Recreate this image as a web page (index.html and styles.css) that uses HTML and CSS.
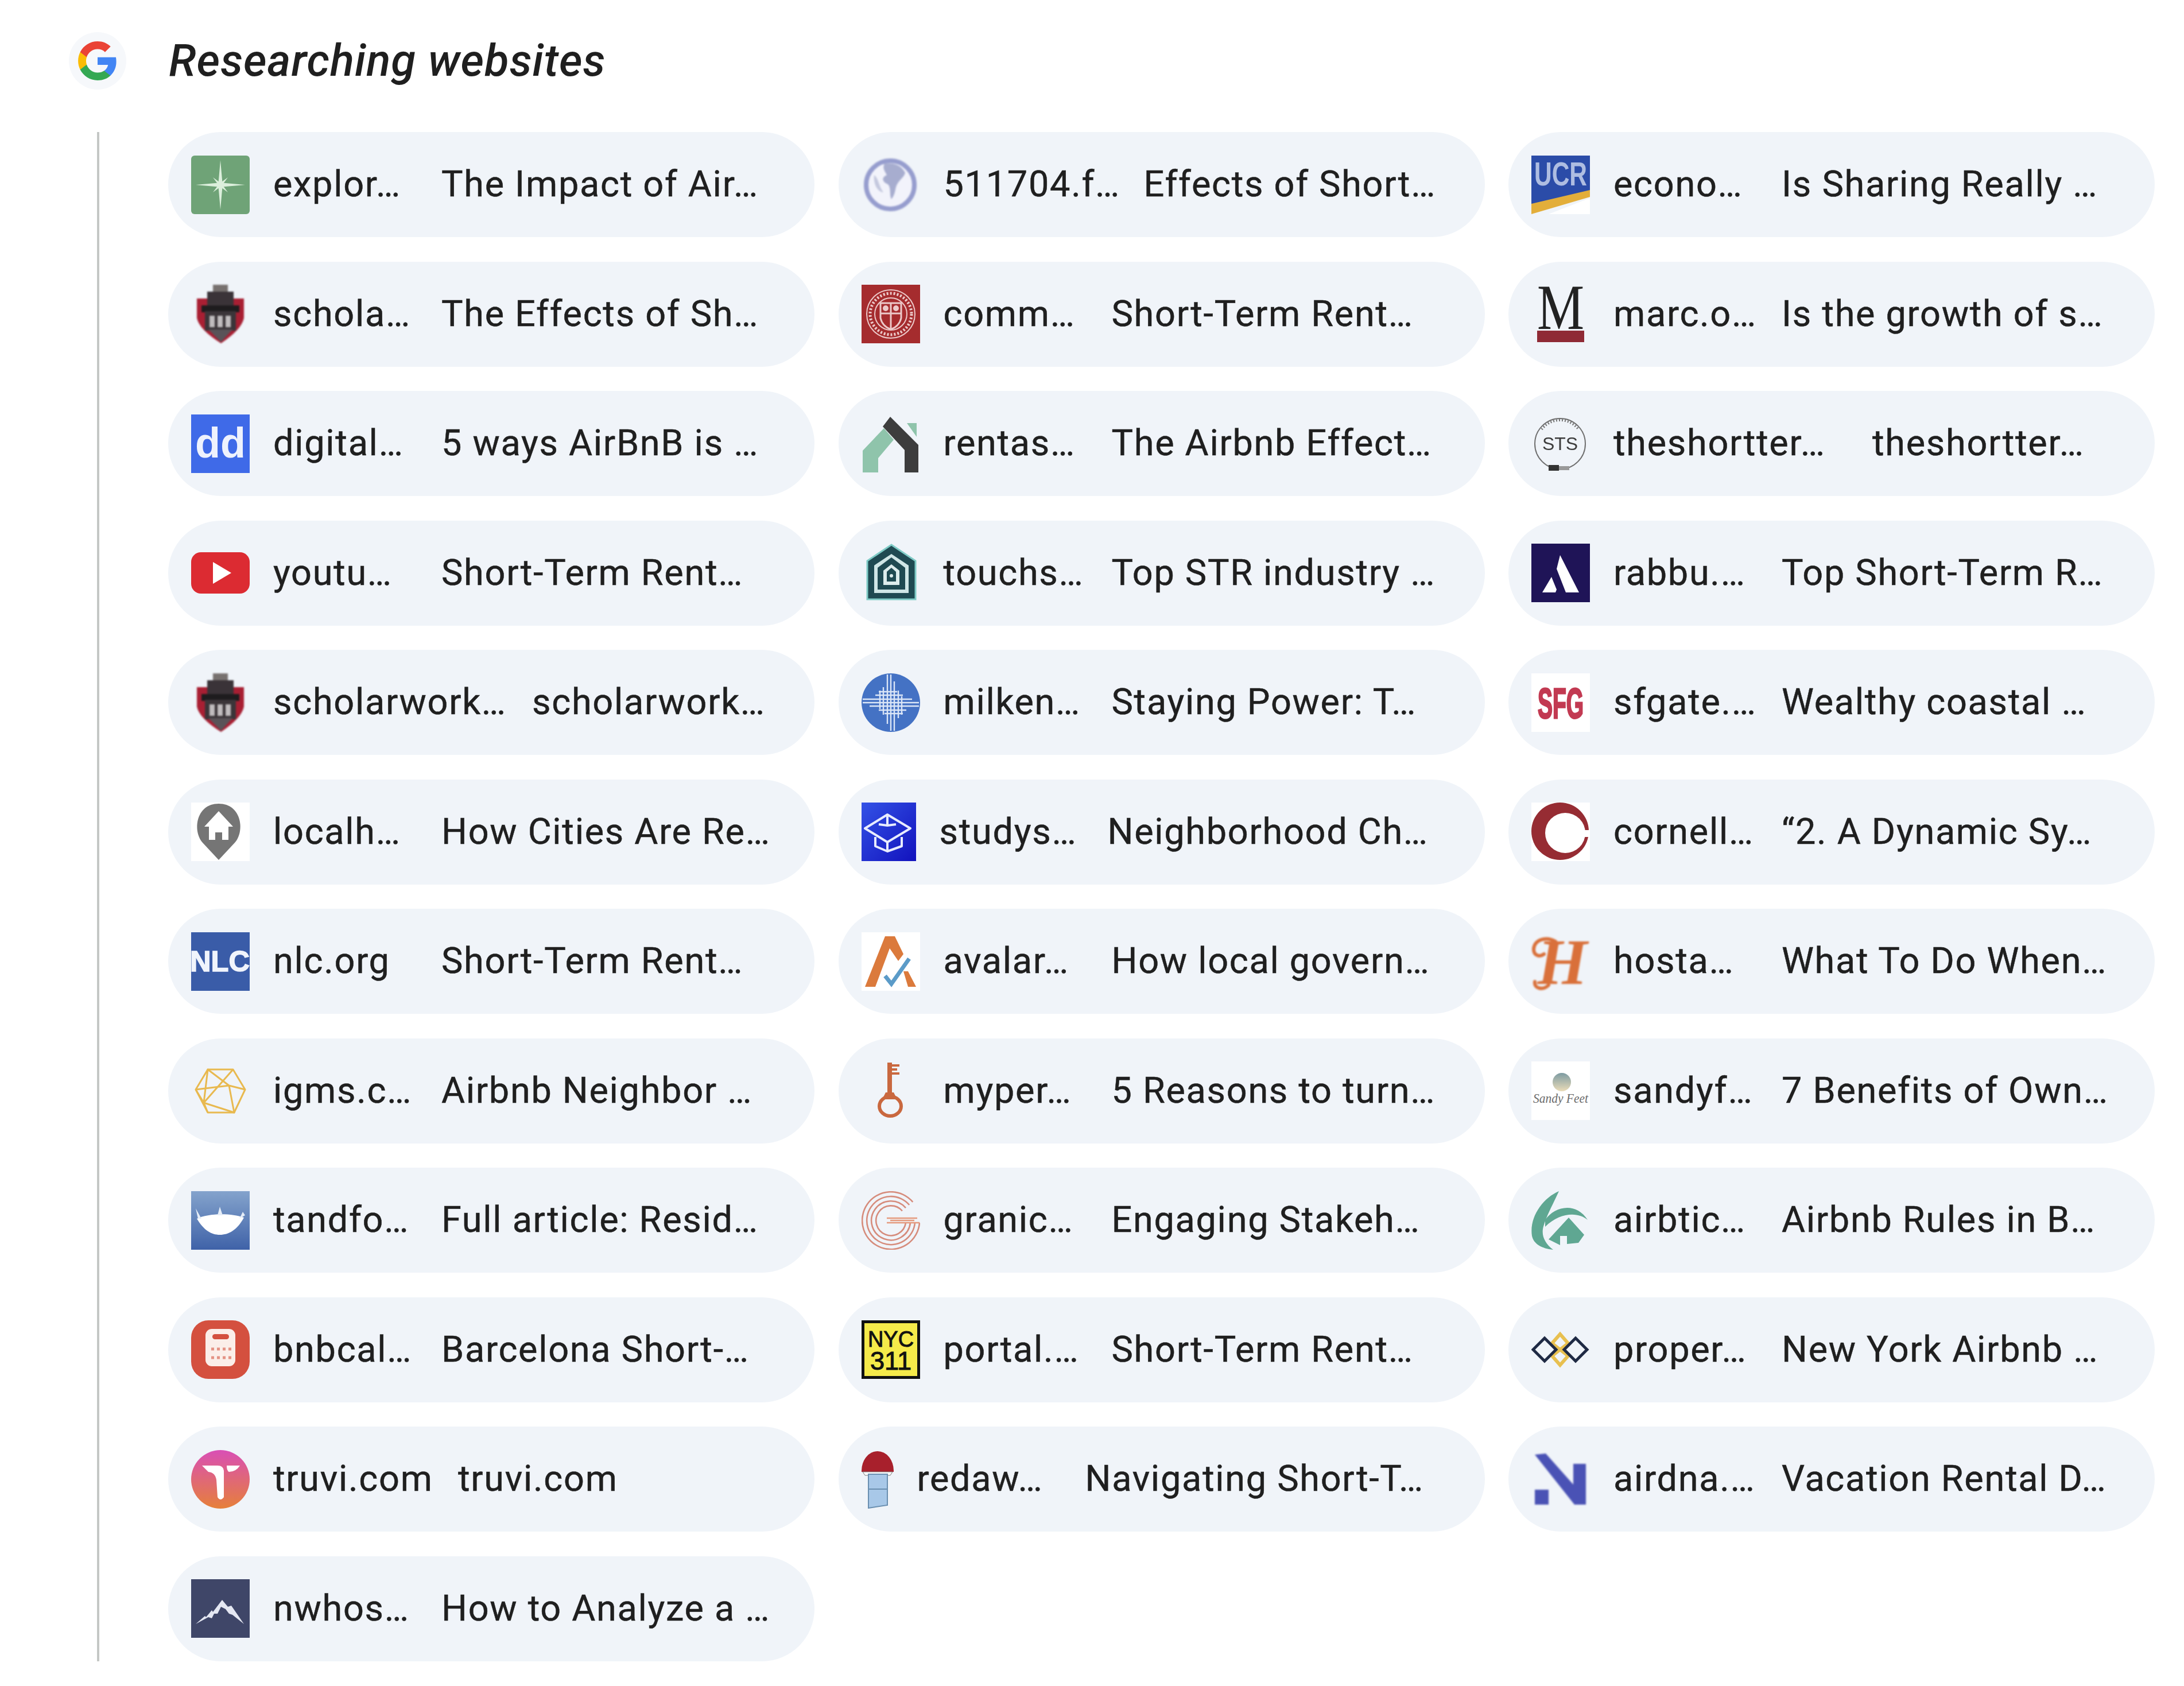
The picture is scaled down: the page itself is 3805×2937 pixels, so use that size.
FILE: index.html
```html
<!DOCTYPE html>
<html lang="en">
<head>
<meta charset="utf-8">
<title>Researching websites</title>
<link rel="stylesheet" href="styles.css">
</head>
<body>
<main class="page">
<header class="head">
<span class="g-badge"><svg class="g-logo" viewBox="0 0 48 48"><path fill="#4285F4" d="M45.12 24.5c0-1.56-.14-3.06-.4-4.5H24v8.51h11.84c-.51 2.75-2.06 5.08-4.39 6.64v5.52h7.11c4.16-3.83 6.56-9.47 6.56-15.17z"/><path fill="#34A853" d="M24 46c5.94 0 10.92-1.97 14.56-5.33l-7.11-5.52c-1.97 1.32-4.49 2.1-7.45 2.1-5.73 0-10.58-3.87-12.31-9.07H4.34v5.7C7.96 41.07 15.4 46 24 46z"/><path fill="#FBBC05" d="M11.69 28.18C11.25 26.86 11 25.45 11 24s.25-2.86.69-4.18v-5.7H4.34C2.85 17.09 2 20.45 2 24c0 3.55.85 6.91 2.34 9.88l7.35-5.7z"/><path fill="#EA4335" d="M24 10.75c3.23 0 6.13 1.11 8.41 3.29l6.31-6.31C34.91 4.18 29.93 2 24 2 15.4 2 7.96 6.93 4.34 14.12l7.35 5.7c1.73-5.2 6.58-9.07 12.31-9.07z"/></svg></span>
<h1 class="title">Researching websites</h1>
</header>
<section class="thread">
<div class="grid">

<a class="chip"><svg class="ico" viewBox="0 0 102 102"><rect width="102" height="102" rx="6" fill="#6fa377"/><path fill="#dcefdc" d="M51 8 54.5 47.5 94 51 54.5 54.5 51 94 47.5 54.5 8 51 47.5 47.5Z"/><path fill="#dcefdc" d="M38 38 53 49 64 64 49 53ZM64 38 53 53 38 64 49 49Z"/></svg><span class="dom">explor…</span><span class="ttl">The Impact of Air…</span></a>
<a class="chip"><svg class="ico ico-soft" viewBox="0 0 102 102"><circle cx="50" cy="51" r="42" fill="#f2f3fb" stroke="#969dce" stroke-width="8"/><path fill="#a7adcf" d="M40 14C58 12 70 18 76 30 74 38 66 42 62 50 58 56 60 66 52 76 48 68 52 56 46 50 36 46 34 38 44 34 40 26 36 22 40 14Z"/><path fill="#c4c8de" d="M22 34C30 40 30 54 38 64 30 64 20 52 22 34Z"/></svg><span class="dom dom-md">511704.f…</span><span class="ttl">Effects of Short…</span></a>
<a class="chip"><svg class="ico" viewBox="0 0 102 102"><path fill="#2b4ca8" d="M0 0H102V64L0 88Z"/><path fill="#e3ae3a" d="M0 84 102 60V72L0 102Z"/><path fill="#fff" d="M30 102 102 74V102Z"/><text class="logo-sans logo-ghost" x="51" y="52" font-size="58" fill="#c5d1ec" text-anchor="middle" textLength="92" lengthAdjust="spacingAndGlyphs">UCR</text></svg><span class="dom">econo…</span><span class="ttl">Is Sharing Really …</span></a>

<a class="chip"><svg class="ico ico-soft" viewBox="0 0 102 102"><rect x="38" y="0" width="26" height="16" fill="#77716f"/><path fill="#a81f33" d="M10 24H92V58Q88 78 52 102 14 78 10 58Z"/><rect x="28" y="12" width="46" height="26" fill="#3a3338"/><rect x="18" y="36" width="66" height="12" fill="#1e1c1e"/><rect x="24" y="46" width="54" height="34" fill="#3b3539"/><path fill="#c0bcbe" d="M32 54h9v20h-9zM46 54h9v20h-9zM60 54h9v20h-9z"/><path fill="#595358" d="M30 78 52 100 72 78Z"/></svg><span class="dom">schola…</span><span class="ttl">The Effects of Sh…</span></a>
<a class="chip"><svg class="ico" viewBox="0 0 102 102"><rect width="102" height="102" fill="#a52c2e"/><g fill="none" stroke="#ecc9c9"><circle cx="51" cy="51" r="42" stroke-width="2"/><circle cx="51" cy="51" r="36" stroke-width="5" stroke-dasharray="3 3"/><circle cx="51" cy="51" r="28" stroke-width="2"/><path stroke-width="3" d="M33 32H69V58Q66 72 51 78 36 72 33 58ZM33 50H69M51 32V78"/></g><circle cx="42" cy="41" r="5" fill="#ecc9c9"/><circle cx="60" cy="41" r="5" fill="#ecc9c9"/></svg><span class="dom">comm…</span><span class="ttl">Short-Term Rent…</span></a>
<a class="chip"><svg class="ico" viewBox="0 0 102 102"><text class="logo-serif" x="51" y="77" font-size="112" fill="#222" text-anchor="middle" textLength="82" lengthAdjust="spacingAndGlyphs">M</text><rect x="10" y="80" width="82" height="20" fill="#8f2a35"/></svg><span class="dom">marc.o…</span><span class="ttl">Is the growth of s…</span></a>

<a class="chip"><svg class="ico" viewBox="0 0 102 102"><rect width="102" height="102" fill="#3f6ae8"/><text class="logo-sans" x="51" y="75" font-size="74" fill="#eef2fd" text-anchor="middle" textLength="88" lengthAdjust="spacingAndGlyphs">dd</text></svg><span class="dom">digital…</span><span class="ttl">5 ways AirBnB is …</span></a>
<a class="chip"><svg class="ico" viewBox="0 0 102 102"><path fill="#8fc4ab" d="M2 63 39 24 56 44 29 76V101H2ZM79 15H96V39Z"/><path fill="#3d3d3d" d="M50 4 99 53V101H75V62L37 21Z"/></svg><span class="dom">rentas…</span><span class="ttl">The Airbnb Effect…</span></a>
<a class="chip"><svg class="ico" viewBox="0 0 102 102"><circle cx="50" cy="51" r="44" fill="none" stroke="#6f6f6f" stroke-width="2"/><path fill="none" stroke="#777" stroke-width="4" stroke-dasharray="2 3" d="M18 26A40 40 0 0 1 82 26"/><text class="logo-plain" x="50" y="62" font-size="32" fill="#3c3c3c" text-anchor="middle">STS</text><rect x="30" y="88" width="18" height="10" fill="#333"/><rect x="48" y="90" width="18" height="7" fill="#999"/></svg><span class="dom dom-lg">theshortter…</span><span class="ttl">theshortter…</span></a>

<a class="chip"><svg class="ico" viewBox="0 0 102 102"><rect y="15" width="102" height="72" rx="17" fill="#dc2b32"/><path fill="#fff" d="M38 32V70L70 51Z"/></svg><span class="dom">youtu…</span><span class="ttl">Short-Term Rent…</span></a>
<a class="chip"><svg class="ico" viewBox="0 0 102 102"><path fill="#1f4a52" stroke="#7fcbc6" stroke-width="3" d="M52 2 94 30V97H10V30Z"/><path fill="#cfe6e6" d="M52 18 82 38V86H22V38Z"/><path fill="#1f4a52" d="M52 24 76 42V80H28V42Z"/><path fill="#dcecec" d="M52 36 66 47V72H38V47Z"/><path fill="#1f4a52" d="M52 42 60 49V66H44V49Z"/><circle cx="52" cy="56" r="3" fill="#dcecec"/></svg><span class="dom">touchs…</span><span class="ttl">Top STR industry …</span></a>
<a class="chip"><svg class="ico" viewBox="0 0 102 102"><rect width="102" height="102" fill="#1f1457"/><path fill="#fff" d="M50 20 83 85H60L44 44ZM35 58 44 80 42 85H19Z"/></svg><span class="dom">rabbu.…</span><span class="ttl">Top Short-Term R…</span></a>

<a class="chip"><svg class="ico ico-soft" viewBox="0 0 102 102"><rect x="38" y="0" width="26" height="16" fill="#77716f"/><path fill="#a81f33" d="M10 24H92V58Q88 78 52 102 14 78 10 58Z"/><rect x="28" y="12" width="46" height="26" fill="#3a3338"/><rect x="18" y="36" width="66" height="12" fill="#1e1c1e"/><rect x="24" y="46" width="54" height="34" fill="#3b3539"/><path fill="#c0bcbe" d="M32 54h9v20h-9zM46 54h9v20h-9zM60 54h9v20h-9z"/><path fill="#595358" d="M30 78 52 100 72 78Z"/></svg><span class="dom dom-lg">scholarwork…</span><span class="ttl">scholarwork…</span></a>
<a class="chip"><svg class="ico" viewBox="0 0 102 102"><circle cx="51" cy="51" r="51" fill="#4472c4"/><path fill="none" stroke="#dbe6f7" stroke-width="2.4" d="M2 45H88M2 51H100M14 57H100M24 38H72M30 64H78M30 32H62M40 70H72M45 2V88M51 2V100M57 14V100M38 24V72M64 30V78M32 30V62M70 40V72"/></svg><span class="dom">milken…</span><span class="ttl">Staying Power: T…</span></a>
<a class="chip"><svg class="ico" viewBox="0 0 102 102"><rect width="102" height="102" fill="#fff"/><text class="logo-sans" x="51" y="78" font-size="74" fill="#c23a52" stroke="#c23a52" stroke-width="3" text-anchor="middle" textLength="80" lengthAdjust="spacingAndGlyphs">SFG</text></svg><span class="dom">sfgate.…</span><span class="ttl">Wealthy coastal …</span></a>

<a class="chip"><svg class="ico" viewBox="0 0 102 102"><rect width="102" height="102" fill="#fff"/><path fill="#757575" d="M48 100 20 70C2 50 8 2 48 2 88 2 94 50 76 70Z"/><path fill="#fff" d="M48 15 73 42H65V65H54V52H42V65H31V42H23Z"/></svg><span class="dom">localh…</span><span class="ttl">How Cities Are Re…</span></a>
<a class="chip"><svg class="ico ico-95" viewBox="0 0 95 102"><defs><linearGradient id="gStudy" x1="0" y1="0" x2="1" y2="1"><stop offset="0" stop-color="#3352e6"/><stop offset="1" stop-color="#1212bd"/></linearGradient></defs><rect width="95" height="102" fill="url(#gStudy)"/><g fill="none" stroke="#e8ecff" stroke-width="4" stroke-linejoin="round"><path d="M45 21 85 45 45 69 6 45Z"/><path d="M45 21V40M24 60V76L45 85 70 76V60M45 69V85M30 38 45 40 60 38"/></g></svg><span class="dom">studys…</span><span class="ttl">Neighborhood Ch…</span></a>
<a class="chip"><svg class="ico" viewBox="0 0 102 102"><rect width="102" height="102" fill="#fff"/><circle cx="50" cy="50" r="50" fill="#962c33"/><circle cx="59" cy="53" r="35" fill="#fff"/><path fill="#fff" d="M70 48H102V60H70Z"/></svg><span class="dom">cornell…</span><span class="ttl">“2. A Dynamic Sy…</span></a>

<a class="chip"><svg class="ico" viewBox="0 0 102 102"><rect width="102" height="102" fill="#3a5ca8"/><text class="logo-sans" x="50" y="68" font-size="50" fill="#f0f4fc" stroke="#f0f4fc" stroke-width="1.5" text-anchor="middle" textLength="104" lengthAdjust="spacingAndGlyphs">NLC</text></svg><span class="dom">nlc.org</span><span class="ttl">Short-Term Rent…</span></a>
<a class="chip"><svg class="ico" viewBox="0 0 102 102"><rect width="102" height="102" fill="#fff"/><path fill="#db7a3c" d="M6 95H24L49 28 64 50 73 38 58 7H41ZM73 68H81L95 95H81Z"/><path fill="none" stroke="#5b9bc8" stroke-width="7" d="M41 76 52 90 83 46"/></svg><span class="dom">avalar…</span><span class="ttl">How local govern…</span></a>
<a class="chip"><svg class="ico ico-soft" viewBox="0 0 102 102"><text class="logo-serif-i" x="54" y="90" font-size="112" fill="#d9703a" text-anchor="middle">H</text><path fill="none" stroke="#d9703a" stroke-width="6" stroke-linecap="round" d="M42 16C24 6 4 14 4 30 4 40 14 44 22 38M30 92C20 102 4 98 6 86"/></svg><span class="dom">hosta…</span><span class="ttl">What To Do When…</span></a>

<a class="chip"><svg class="ico" viewBox="0 0 102 102"><g fill="none" stroke="#e8b94f" stroke-width="3" stroke-linejoin="round"><path d="M8 49 29 14H73L94 49 75 89H29Z"/><path d="M29 14 22 72 75 89 66 42ZM29 14 66 42 94 49M8 49 66 42M22 72 73 14M8 49 22 72 29 89"/></g></svg><span class="dom">igms.c…</span><span class="ttl">Airbnb Neighbor …</span></a>
<a class="chip"><svg class="ico" viewBox="0 0 102 102"><g fill="#c9683f"><rect x="45" y="2" width="8" height="56"/><path d="M50 5H66V9H52zM50 12H62V16H52zM50 19H66V23H52zM42 54H56L62 66H36Z"/></g><ellipse cx="50" cy="78" rx="19" ry="17" fill="none" stroke="#c9683f" stroke-width="6"/></svg><span class="dom">myper…</span><span class="ttl">5 Reasons to turn…</span></a>
<a class="chip"><svg class="ico" viewBox="0 0 102 102"><rect width="102" height="102" fill="#fff"/><defs><linearGradient id="gSand" x1="0" y1="0" x2="0" y2="1"><stop offset="0" stop-color="#7d9ba2"/><stop offset="1" stop-color="#eadcb8"/></linearGradient></defs><circle cx="53" cy="36" r="16" fill="url(#gSand)"/><text class="logo-serif-n" x="51" y="72" font-size="24" fill="#6b6b6b" text-anchor="middle" textLength="96" lengthAdjust="spacingAndGlyphs">Sandy Feet</text></svg><span class="dom">sandyf…</span><span class="ttl">7 Benefits of Own…</span></a>

<a class="chip"><svg class="ico" viewBox="0 0 102 102"><defs><linearGradient id="gTand" x1="0" y1="0" x2="0" y2="1"><stop offset="0" stop-color="#84a3cc"/><stop offset="1" stop-color="#3f62a8"/></linearGradient></defs><rect width="102" height="102" fill="url(#gTand)"/><path fill="#fff" d="M10 48C30 38 70 38 92 46 80 68 65 76 50 76 35 76 22 68 10 48Z"/><path fill="#e5edf7" d="M46 42 50 27 55 42ZM8 30 18 48H12ZM90 36 94 42 84 48Z"/></svg><span class="dom">tandfo…</span><span class="ttl">Full article: Resid…</span></a>
<a class="chip"><svg class="ico" viewBox="0 0 102 102"><g fill="none" stroke="#d68c7c" stroke-width="2.6"><path d="M89.3 18.9A50 50 0 1 0 101 55"/><path d="M83.2 24A42 42 0 1 0 93 55"/><path d="M77 29.1A34 34 0 1 0 85 55"/><path d="M70.9 34.3A26 26 0 1 0 77 55"/><path stroke="#e59a7e" d="M44 47H97M50 51H92M44 55H101"/></g></svg><span class="dom">granic…</span><span class="ttl">Engaging Stakeh…</span></a>
<a class="chip"><svg class="ico" viewBox="0 0 102 102"><g fill="#5fa792"><path d="M48 0C20 12-4 45 1 78 4 92 18 100 38 102 25 92 18 80 20 66 24 48 34 30 48 0Z"/><path d="M24 50C40 26 78 18 98 50 82 36 50 36 24 62Z"/><path d="M30 84 65 46 92 76 82 90 62 92V78H50V94Z"/></g></svg><span class="dom">airbtic…</span><span class="ttl">Airbnb Rules in B…</span></a>

<a class="chip"><svg class="ico" viewBox="0 0 102 102"><rect width="102" height="102" rx="30" fill="#d4503f"/><rect x="25" y="15" width="52" height="65" rx="11" fill="#fbeee9"/><rect x="37" y="24" width="29" height="9" rx="4.5" fill="#d4503f"/><path fill="none" stroke="#e49385" stroke-width="5" stroke-dasharray="5 5" d="M35 50H70M35 65H70"/></svg><span class="dom">bnbcal…</span><span class="ttl">Barcelona Short-…</span></a>
<a class="chip"><svg class="ico" viewBox="0 0 102 102"><rect width="102" height="102" fill="#111"/><rect x="5" y="5" width="92" height="92" fill="#f5ea4a"/><text class="logo-plain" x="51" y="46" font-size="38" fill="#111" stroke="#111" text-anchor="middle" textLength="80" lengthAdjust="spacingAndGlyphs">NYC</text><text class="logo-plain" x="51" y="86" font-size="44" fill="#111" stroke="#111" text-anchor="middle" textLength="72" lengthAdjust="spacingAndGlyphs">311</text></svg><span class="dom">portal.…</span><span class="ttl">Short-Term Rent…</span></a>
<a class="chip"><svg class="ico" viewBox="0 0 102 102"><g fill="none" stroke="#e8c050" stroke-width="6"><path d="M36 40 50 24 64 40 50 51ZM36 62 50 51 64 62 50 78Z"/></g><g fill="none" stroke="#1f2a44" stroke-width="5"><path d="M23 31 43 51 23 71 3 51Z"/><path d="M77 31 97 51 77 71 57 51Z"/></g></svg><span class="dom">proper…</span><span class="ttl">New York Airbnb …</span></a>

<a class="chip"><svg class="ico" viewBox="0 0 102 102"><defs><linearGradient id="gTruvi" x1="0" y1="0" x2="0" y2="1"><stop offset="0" stop-color="#d94fb5"/><stop offset="1" stop-color="#e6803a"/></linearGradient></defs><circle cx="51" cy="51" r="51" fill="url(#gTruvi)"/><path fill="#fff" d="M19 27H46Q56 27 57 36V82Q51 90 46 82L44 52Q42 39 30 38ZM62 27H85Q78 38 66 38 62 36 62 27Z"/></svg><span class="dom dom-sm">truvi.com</span><span class="ttl">truvi.com</span></a>
<a class="chip"><svg class="ico ico-56" viewBox="0 0 56 102"><path fill="#a8202c" d="M0 36A28 34 0 0 1 56 36V38H0Z"/><path fill="#fff" stroke="#777" d="M2 38H54L50 44H6Z"/><path fill="#a8c8e8" stroke="#6a8fb0" stroke-width="2" d="M12 42H45V96L12 101Z"/><path fill="none" stroke="#6a8fb0" stroke-width="2" d="M12 68H45"/></svg><span class="dom">redaw…</span><span class="ttl">Navigating Short-T…</span></a>
<a class="chip"><svg class="ico ico-soft" viewBox="0 0 102 102"><path fill="#4a52b5" d="M6 8 25 6 73 60V24H95V95H75ZM6 69H30V95H6Z"/></svg><span class="dom">airdna.…</span><span class="ttl">Vacation Rental D…</span></a>

<a class="chip"><svg class="ico" viewBox="0 0 102 102"><rect width="102" height="102" fill="#3f4668"/><path fill="#e4e7f2" d="M8 78 24 64 26 66 36 54 38 57 54 36 64 48 70 46 92 78 72 62 66 60 60 52 52 48 46 60 40 60 36 68 30 66Z"/></svg><span class="dom">nwhos…</span><span class="ttl">How to Analyze a …</span></a>

</div>
</section>
</main>
</body>
</html>
```
FILE: styles.css
```css
html, body { margin: 0; background: #fff; }
body { font-family: Roboto, "Noto Sans", sans-serif; color: #1f1f1f; }
.page { width: 3805px; height: 2937px; padding: 56px 0 0 120px; box-sizing: border-box; filter: blur(.7px); }
.head { display: flex; align-items: center; gap: 74px; height: 100px; }
.g-badge { width: 100px; height: 100px; border-radius: 50%; background: #f6f8fb; display: flex; align-items: center; justify-content: center; }
.g-logo { width: 74px; height: 74px; }
.title { margin: 0; font-size: 78px; font-weight: 500; font-style: italic; letter-spacing: 1px; line-height: 100px; }
.thread { margin: 74px 0 0 49px; border-left: 4px solid #c4c7c5; padding-left: 120px; width: 3512px; box-sizing: border-box; }
.grid { display: grid; grid-template-columns: repeat(3, 1126px); column-gap: 41.5px; row-gap: 42.5px; }
.chip { height: 183px; border-radius: 92px; background: #f0f4f9; padding-left: 40px; display: flex; align-items: center; font-size: 63px; letter-spacing: 1.7px; white-space: nowrap; overflow: hidden; color: #1f1f1f; }
.dom, .ttl { padding-bottom: 2px; -webkit-text-stroke: .5px #1f1f1f; }
.ico { width: 102px; height: 102px; flex: none; margin-right: 41px; }
.ico-soft { filter: blur(1.6px); }
.ico-95 { width: 95px; }
.ico-56 { width: 56px; }
.dom { flex: none; width: 293px; }
.dom-sm { width: 322px; }
.dom-md { width: 349px; }
.dom-lg { width: 451px; }
.logo-sans { font-family: "Liberation Sans", sans-serif; font-weight: 700; letter-spacing: 0; }
.logo-ghost { opacity: .85; }
.logo-plain { font-family: "Liberation Sans", sans-serif; letter-spacing: 0; }
.logo-serif { font-family: "Liberation Serif", serif; letter-spacing: 0; }
.logo-serif-i { font-family: "Liberation Serif", serif; font-style: italic; font-weight: 700; letter-spacing: 0; }
.logo-serif-n { font-family: "Liberation Serif", serif; font-style: italic; letter-spacing: 0; }
```
